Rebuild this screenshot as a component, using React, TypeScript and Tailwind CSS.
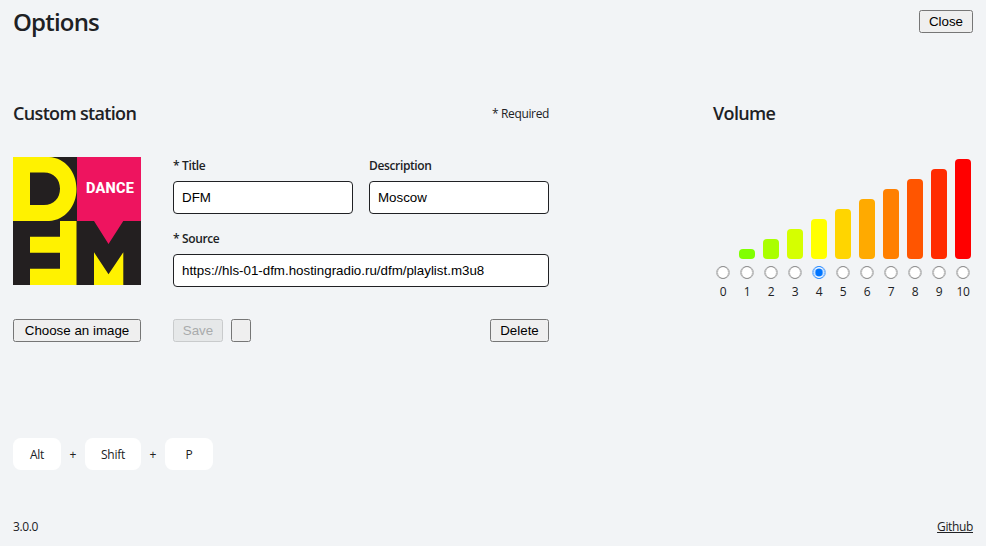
import type { ReactNode } from 'react';

const bars = [
  { level: 0, height: 'h-0', color: 'bg-transparent' },
  { level: 1, height: 'h-[10px]', color: 'bg-[#80ff00]' },
  { level: 2, height: 'h-[20px]', color: 'bg-[#aaff00]' },
  { level: 3, height: 'h-[30px]', color: 'bg-[#d5ff00]' },
  { level: 4, height: 'h-[40px]', color: 'bg-[#ffff00]' },
  { level: 5, height: 'h-[50px]', color: 'bg-[#ffd500]' },
  { level: 6, height: 'h-[60px]', color: 'bg-[#ffaa00]' },
  { level: 7, height: 'h-[70px]', color: 'bg-[#ff8000]' },
  { level: 8, height: 'h-[80px]', color: 'bg-[#ff5500]' },
  { level: 9, height: 'h-[90px]', color: 'bg-[#ff2b00]' },
  { level: 10, height: 'h-[100px]', color: 'bg-[#ff0000]' },
];

function Button({ className = '', disabled = false, children }: { className?: string; disabled?: boolean; children?: ReactNode }) {
  const tone = disabled
    ? 'border-[#c9cbcc] bg-[#e6e8e9] text-[#a9abac]'
    : 'border-[#767676] bg-[#efefef] text-black';
  return (
    <button
      disabled={disabled}
      className={`flex h-[23px] shrink-0 items-center justify-center rounded-[2.5px] border font-['Liberation_Sans',Arial,sans-serif] text-[13.333px] leading-[15px] whitespace-nowrap ${tone} ${className}`}
    >
      {children}
    </button>
  );
}

function Field({ label, value, className = '' }: { label: string; value: string; className?: string }) {
  return (
    <label className={`flex flex-col gap-[7px] ${className}`}>
      <span className="h-4 text-[12px] leading-4 font-semibold tracking-[-0.36px]">{label}</span>
      <input
        defaultValue={value}
        className="h-[33px] w-full rounded-[4px] border border-[#202124] bg-white px-2 font-['Liberation_Sans',Arial,sans-serif] text-[13.333px] text-black outline-none"
      />
    </label>
  );
}

function StationLogo() {
  return (
    <svg width="128" height="128" viewBox="0 0 128 128" className="block">
      <rect width="128" height="128" fill="#231f20" />
      <path d="M0 0H36C52.5 1 63.5 15 63.5 32S52.5 63 36 64H0ZM17 15.5V48H31C41 48 47 41 47 31.8S41 15.5 31 15.5Z" fill="#fff200" fillRule="evenodd" />
      <path d="M47 64H63.5V128H17V111.7H47V95.7H17V79.7H47Z" fill="#fff200" />
      <path d="M64 0H128V64H110.3L95.5 87L81 64H64Z" fill="#ee145f" />
      <path d="M81 128V95.3L95.5 117.3L110.3 95.3V128Z" fill="#fff200" />
      <text x="73" y="35.8" textLength="48" lengthAdjust="spacing" fill="#fff" fontFamily="Roboto, sans-serif" fontWeight="800" fontSize="14.5">
        DANCE
      </text>
    </svg>
  );
}

function Key({ width, children }: { width: string; children: ReactNode }) {
  return <kbd className={`flex h-8 items-center justify-center rounded-lg bg-white pt-[2px] font-['Open_Sans',sans-serif] text-[12px] tracking-[-0.3px] ${width}`}>{children}</kbd>;
}

export default function App() {
  return (
    <main className="flex h-[546px] w-[986px] flex-col bg-[#f2f4f6] px-[13px] font-['Open_Sans','Noto_Sans',sans-serif] text-[12px] text-[#202124]">
      <header className="flex h-[102px] items-start justify-between pt-[10px]">
        <h1 className="-mt-[4px] text-[24px] leading-8 font-semibold tracking-[-0.8px]">Options</h1>
        <Button className="w-[54px]">Close</Button>
      </header>

      <div className="flex h-[336px] justify-between">
        <section className="w-[536px]">
          <div className="flex h-[55px] items-start justify-between">
            <h2 className="-mt-px text-[18px] leading-6 font-semibold tracking-[-0.66px]">Custom station</h2>
            <span className="pt-[4px] leading-4 tracking-[-0.36px]">* Required</span>
          </div>
          <div className="flex gap-8">
            <div className="flex w-32 flex-col gap-[34px]">
              <StationLogo />
              <Button className="w-32">Choose an image</Button>
            </div>
            <div className="flex w-[376px] flex-col pt-px">
              <div className="flex gap-4">
                <Field label="* Title" value="DFM" className="w-[180px]" />
                <Field label="Description" value="Moscow" className="w-[180px]" />
              </div>
              <Field label="* Source" value="https://hls-01-dfm.hostingradio.ru/dfm/playlist.m3u8" className="mt-[17px]" />
              <div className="mt-8 flex gap-2">
                <Button disabled className="w-[50px]">Save</Button>
                <Button className="w-5" />
                <Button className="ml-auto w-[59px]">Delete</Button>
              </div>
            </div>
          </div>
        </section>

        <section className="w-[260px]">
          <h2 className="-mt-px mb-px text-[18px] leading-6 font-semibold tracking-[-0.66px]">Volume</h2>
          <div className="-ml-[2px] flex h-[133px] items-end">
            {bars.map((bar) => (
              <div key={bar.level} className="flex h-[100px] w-6 shrink-0 items-end justify-center">
                <div className={`w-4 rounded-[4px] ${bar.height} ${bar.color}`} />
              </div>
            ))}
          </div>
          <div className="-ml-[2px] flex pt-[7px]">
            {bars.map((bar) => (
              <label key={bar.level} className="flex w-6 shrink-0 flex-col items-center gap-[5px]">
                <input type="radio" name="volume" defaultChecked={bar.level === 4} className="m-0 ml-[6px] block size-[13px] translate-x-[-0.5px] self-start will-change-transform" />
                <span className="leading-4 tracking-[-0.3px]">{bar.level}</span>
              </label>
            ))}
          </div>
        </section>
      </div>

      <div className="flex h-8 items-center">
        <Key width="w-12">Alt</Key>
        <span className="w-6 pt-[2px] text-center">+</span>
        <Key width="w-14">Shift</Key>
        <span className="w-6 pt-[2px] text-center">+</span>
        <Key width="w-12">P</Key>
      </div>

      <footer className="mt-auto flex h-[27px] justify-between leading-4 tracking-[-0.36px]">
        <span>3.0.0</span>
        <a href="#" className="underline underline-offset-1">Github</a>
      </footer>
    </main>
  );
}
